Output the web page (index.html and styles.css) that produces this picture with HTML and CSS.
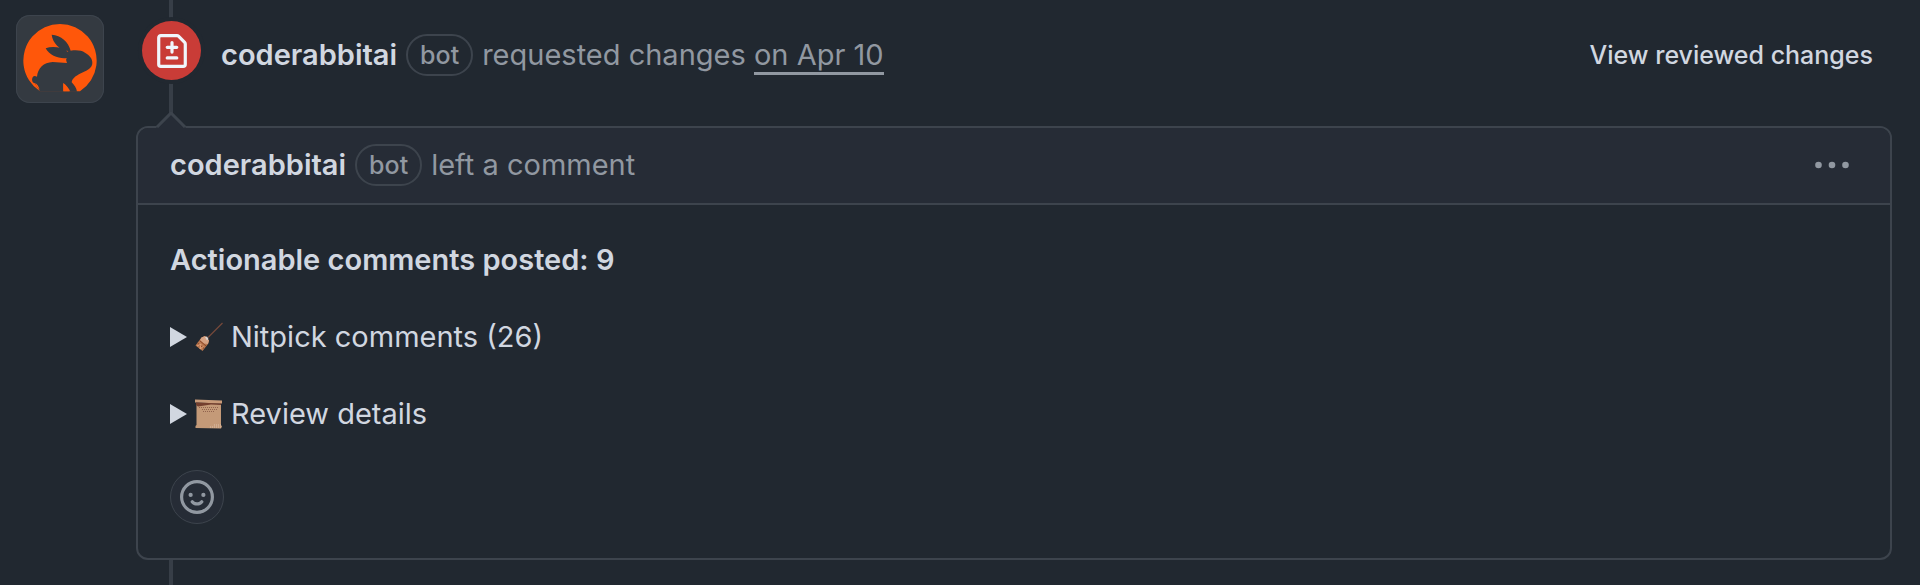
FILE: index.html
```
<!DOCTYPE html>
<html lang="en">
<head>
<meta charset="utf-8">
<meta name="viewport" content="width=device-width, initial-scale=1">
<title>Review by coderabbitai</title>
<link rel="stylesheet" href="styles.css">
</head>
<body>
<main class="timeline-item">
  <a class="avatar" href="#" aria-label="coderabbitai">
    <svg viewBox="0 0 264 264" aria-hidden="true">
      <path fill="#ff570a" d="M72 229A110 110 0 1 1 192 229Z"/>
      <path fill="#343a41" d="M72 230C68 221 61 215 57 205C48 203 46 192 51 185C54 182 59 183 63 185C65 160 83 142 110 141C124 141 138 144 153 144C151 138 149 134 152 129C132 132 100 123 89 100C109 93 136 96 155 110L157 108C131 105 110 84 107 59C135 60 158 82 164 107C182 105 197 106 207 113C220 120 230 131 229 144C229 158 214 166 201 172C184 179 168 190 167 202C174 209 182 219 183 230H163C159 220 151 211 142 204V230Z"/>
      <path fill="#ff570a" d="M58 204C64 208 68 214 71 224C63 218 59 211 58 204ZM142 205C150 212 156 219 160 229H142Z"/>
    </svg>
  </a>
  <div class="review">
    <div class="event">
      <span class="badge">
        <svg viewBox="0 0 16 16" aria-hidden="true"><path fill="currentColor" d="M1 1.75C1 .784 1.784 0 2.75 0h7.586c.464 0 .909.184 1.237.513l2.914 2.914c.329.328.513.773.513 1.237v9.586A1.75 1.75 0 0 1 13.25 16H2.75A1.75 1.75 0 0 1 1 14.25Zm1.75-.25a.25.25 0 0 0-.25.25v12.5c0 .138.112.25.25.25h10.5a.25.25 0 0 0 .25-.25V4.664a.25.25 0 0 0-.073-.177l-2.914-2.914a.25.25 0 0 0-.177-.073ZM8 3.25a.75.75 0 0 1 .75.75v1.5h1.5a.75.75 0 0 1 0 1.5h-1.5v1.5a.75.75 0 0 1-1.5 0V7h-1.5a.75.75 0 0 1 0-1.5h1.5V4A.75.75 0 0 1 8 3.25Zm-3 8a.75.75 0 0 1 .75-.75h4.5a.75.75 0 0 1 0 1.5h-4.5a.75.75 0 0 1-.75-.75Z"/></svg>
      </span>
      <div class="event-row">
        <div class="phrase">
          <a class="author" href="#">coderabbitai</a>
          <span class="pill">bot</span>
          <span>requested changes <a class="date" href="#">on Apr 10</a></span>
        </div>
        <a class="view-link" href="#">View reviewed changes</a>
      </div>
    </div>
    <article class="card">
      <svg class="caret" viewBox="0 0 30 16" aria-hidden="true"><path class="caret-fill" d="M0 16L15 1L30 16Z"/><path class="caret-line" d="M1 15L15 1L29 15"/></svg>
      <header class="card-header">
        <div class="phrase">
          <a class="author" href="#">coderabbitai</a>
          <span class="pill">bot</span>
          <span>left a comment</span>
        </div>
        <button class="menu" type="button" aria-label="Show options">
          <svg viewBox="0 0 34 8" aria-hidden="true"><circle cx="3.5" cy="4" r="3.3"/><circle cx="17" cy="4" r="3.3"/><circle cx="30.5" cy="4" r="3.3"/></svg>
        </button>
      </header>
      <div class="card-body">
        <p class="headline">Actionable comments posted: 9</p>
        <details>
          <summary>
            <svg class="marker" viewBox="0 0 17 20" aria-hidden="true"><path d="M0 0L17 10L0 20Z"/></svg>
            <svg class="emoji" viewBox="0 0 30 30" aria-hidden="true">
              <path d="M14 15.5L28.500 1" stroke="#74483a" stroke-width="1.2"/>
              <path fill="#b8764e" d="M7.500 15.500L11 14L15 18.500L14 22L8.500 29L1.500 23.500Z"/>
              <path fill="#d6a283" d="M7.500 15.500L11 14L15 18.500L14 22L10 21.500L6 18Z"/>
              <path fill="none" stroke="#8c4526" d="M5.500 18.500L12 24M3.500 21L10 26.500"/>
              <path fill="#dfd6d0" d="M11 15L13 14.500L14.500 17L13 18.500Z"/>
              <path fill="none" stroke="#e0a17a" d="M3 24L7 22L6 27L9.500 24.500"/>
            </svg>
            <span>Nitpick comments (26)</span>
          </summary>
        </details>
        <details>
          <summary>
            <svg class="marker" viewBox="0 0 17 20" aria-hidden="true"><path d="M0 0L17 10L0 20Z"/></svg>
            <svg class="emoji" viewBox="0 0 30 30" aria-hidden="true">
              <path fill="#c49a78" d="M2.500 4L27 4.500V26L28 27.500L27 29.500L1.500 29V27L2.500 26Z"/>
              <path fill="#c99b79" d="M1 .5L28 1.500V4.500L1 3.500Z"/>
              <path fill="#743f2e" d="M2 3.500L27 4.500V6L17 5.500L4 7.500L2 6Z"/>
              <path fill="none" stroke="#91634e" stroke-dasharray="1 1" d="M5 8.500H25M8 10.500H24M9 12.500H21"/>
              <path fill="none" stroke="#dcc1aa" stroke-dasharray="1 1" d="M16 28H27M20 26H27"/>
            </svg>
            <span>Review details</span>
          </summary>
        </details>
        <button class="react" type="button" aria-label="Add reaction">
          <svg viewBox="0 0 16 16" aria-hidden="true"><path fill="currentColor" d="M8 0a8 8 0 1 1 0 16A8 8 0 0 1 8 0ZM1.500 8a6.500 6.500 0 1 0 13 0 6.500 6.500 0 0 0-13 0Zm3.820 1.636a.75.75 0 0 1 1.038.175l.007.009c.103.118.220.222.350.310.264.178.683.370 1.285.370.602 0 1.020-.192 1.285-.371.130-.088.247-.192.350-.310l.007-.008a.75.75 0 0 1 1.222.870l-.022.030c-.182.248-.422.463-.720.650C9.662 11.680 8.982 12 8 12s-1.662-.320-2.122-.640a3.400 3.400 0 0 1-.720-.650l-.014-.019-.005-.007a.75.75 0 0 1 .181-1.048ZM12 7a1 1 0 1 1-2 0 1 1 0 0 1 2 0ZM5 8a1 1 0 1 1 0-2 1 1 0 0 1 0 2Z"/></svg>
        </button>
      </div>
    </article>
  </div>
</main>
</body>
</html>
```

FILE: styles.css
```
:root {
  --bg: #212830;
  --bg-raised: #262c36;
  --border: #3d444d;
  --text: #d1d7e0;
  --muted: #9198a1;
}

* {
  box-sizing: border-box;
}

body {
  margin: 0;
  background: var(--bg);
  color: var(--text);
  font-family: Inter, "Liberation Sans", sans-serif;
  font-size: 29px;
  line-height: 42px;
}

a {
  color: inherit;
  text-decoration: none;
}

svg {
  display: block;
}

button {
  padding: 0;
  border: 0;
  background: none;
  color: var(--muted);
  cursor: pointer;
}

.timeline-item {
  display: flex;
  gap: 32px;
  padding: 0 28px 0 16px;
}

.avatar {
  flex: none;
  align-self: flex-start;
  width: 88px;
  margin-top: 15px;
  border-radius: 14px;
  background: #343a41;
  box-shadow: inset 0 0 0 1px var(--border);
  overflow: hidden;
}

.review {
  position: relative;
  flex: 1;
  min-width: 0;
  padding-bottom: 25px;
}

.review::before {
  content: "";
  position: absolute;
  top: 0;
  bottom: 0;
  left: 33px;
  width: 4px;
  background: #373e47;
}

.event {
  position: relative;
  display: flex;
  align-items: flex-start;
  gap: 20px;
  padding: 21px 19px 46px 6px;
}

.badge {
  display: grid;
  place-items: center;
  flex: none;
  width: 59px;
  height: 59px;
  border-radius: 50%;
  background: #c93c37;
  color: #f0f6fc;
  box-shadow: 0 0 0 4px var(--bg);
}

.badge svg {
  width: 34px;
  height: 34px;
}

.event-row {
  display: flex;
  flex: 1;
  align-items: center;
  justify-content: space-between;
  padding-top: 13px;
}

.phrase {
  display: flex;
  align-items: center;
  gap: 9px;
  color: var(--muted);
}

.author {
  color: var(--text);
  font-weight: 600;
}

.pill {
  padding: 0 12px;
  border: 2px solid var(--border);
  border-radius: 21px;
  font-size: 25px;
  font-weight: 500;
  line-height: 38px;
}

.date {
  border-bottom: 3px solid var(--muted);
}

.view-link {
  font-size: 25px;
  font-weight: 500;
}

.card {
  position: relative;
  border: 2px solid var(--border);
  border-radius: 12px;
  background: var(--bg);
}

.caret {
  position: absolute;
  top: -16px;
  left: 18px;
  width: 30px;
  height: 16px;
}

.caret-fill {
  fill: var(--bg-raised);
}

.caret-line {
  fill: none;
  stroke: var(--border);
  stroke-width: 3;
}

.card-header {
  display: flex;
  align-items: center;
  justify-content: space-between;
  padding: 16px 41px 17px 32px;
  border-bottom: 2px solid var(--border);
  border-radius: 10px 10px 0 0;
  background: var(--bg-raised);
}

.menu svg {
  width: 34px;
  height: 8px;
  fill: currentColor;
}

.card-body {
  display: flex;
  flex-direction: column;
  align-items: flex-start;
  gap: 35px;
  padding: 34px 32px;
}

.headline {
  margin: 0;
  font-weight: 600;
}

summary {
  display: flex;
  align-items: center;
  gap: 7px;
  list-style: none;
  cursor: pointer;
}

.marker {
  width: 17px;
  height: 20px;
  fill: var(--text);
}

.emoji {
  width: 30px;
  height: 30px;
}

.react {
  display: grid;
  place-items: center;
  width: 54px;
  height: 54px;
  border: 1px solid var(--border);
  border-radius: 50%;
  background: var(--bg-raised);
}

.react svg {
  width: 34px;
  height: 34px;
}
```
